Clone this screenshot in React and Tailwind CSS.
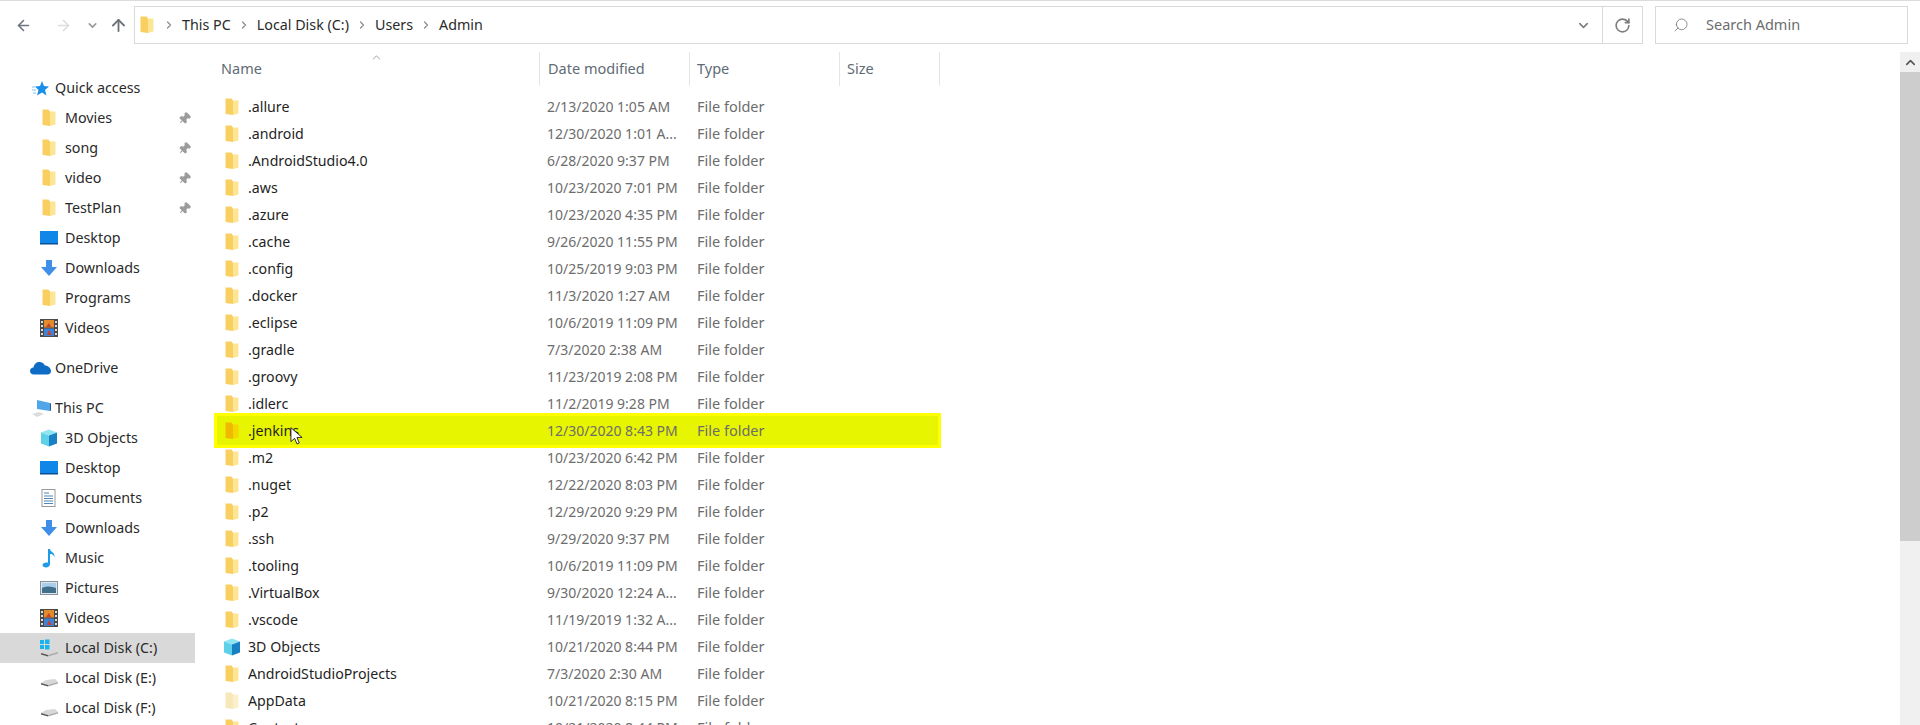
import React from "react";
import { ArrowLeft, ArrowRight, ArrowUp, ChevronDown, ChevronRight, ChevronUp, RotateCw, Search, Pin } from "lucide-react";

const F = "font-['Noto_Sans','Open_Sans',sans-serif]";

function Folder({ pale, strong }) {
  const a = strong ? "#f2d800" : pale ? "#fcf0cc" : "#fde596";
  const b = strong ? "#f0b800" : pale ? "#f8e8b8" : "#f9cf62";
  return (
    <svg width="14" height="18" viewBox="0 0 14 18" className="shrink-0">
      <path d="M0.500 0.500h6l1.500 2V17l-7.500-1z" fill={b} />
      <path d="M8 2.500h5.500V15.500L8 17z" fill={a} />
    </svg>
  );
}
function Cube({ size = 18 }) {
  return (
    <svg width={size} height={size} viewBox="0 0 18 18" className="shrink-0">
      <path d="M9 0.500l8 3-8 3-8-3z" fill="#8fe6f2" />
      <path d="M1 3.500l8 3v11l-8-3z" fill="#5ed0e8" />
      <path d="M9 6.500l8-3v11l-8 3z" fill="#1a80c4" />
    </svg>
  );
}
function Desktop() {
  return (
    <svg width="18" height="14" viewBox="0 0 18 14" className="shrink-0">
      <rect width="18" height="13" fill="#0f86e8" />
      <rect y="12" width="18" height="1.500" fill="#0b4f94" />
    </svg>
  );
}
function Down() {
  return (
    <svg width="18" height="18" viewBox="0 0 18 18" className="shrink-0">
      <path d="M6 1h6v7h5l-8 9-8-9h5z" fill="#3f8fe8" />
    </svg>
  );
}
function Film() {
  return (
    <svg width="18" height="18" viewBox="0 0 18 18" className="shrink-0">
      <rect width="18" height="18" fill="#4a4a4a" />
      <rect x="4" y="1" width="10" height="7.500" fill="#e28a2c" />
      <rect x="4" y="9.500" width="10" height="7.500" fill="#3f82d6" />
      <path d="M6 8l3-4 2 4zM7 16l2-5 3 5z" fill="#c9402c" />
      <g fill="#ddd">
        <rect x="1" y="2" width="2" height="2" /><rect x="1" y="6" width="2" height="2" /><rect x="1" y="10" width="2" height="2" /><rect x="1" y="14" width="2" height="2" />
        <rect x="15" y="2" width="2" height="2" /><rect x="15" y="6" width="2" height="2" /><rect x="15" y="10" width="2" height="2" /><rect x="15" y="14" width="2" height="2" />
      </g>
    </svg>
  );
}
function Doc() {
  return (
    <svg width="16" height="18" viewBox="0 0 16 18" className="shrink-0">
      <rect x="1" y="0.500" width="13" height="17" fill="#fff" stroke="#9a9a9a" />
      <path d="M3 4h5M3 7h9M3 9.500h9M3 12h9M3 14.500h9" stroke="#4f86b8" strokeWidth="1.200" />
    </svg>
  );
}
function Note() {
  return (
    <svg width="14" height="20" viewBox="0 0 14 20" className="shrink-0">
      <path d="M6 1h2c0 3 5 3 4.500 8-1-2.500-3-3-4.500-3v10c0 2-2 3.500-4 3.500s-3.500-1-3.500-2.500 2-3 5.500-2.500z" fill="#1e9be8" />
    </svg>
  );
}
function Pic() {
  return (
    <svg width="18" height="14" viewBox="0 0 18 14" className="shrink-0">
      <rect x="0.500" y="0.500" width="17" height="13" fill="#dfe7ee" stroke="#8a9199" />
      <rect x="2" y="2" width="14" height="5" fill="#a9cdea" />
      <path d="M2 7c4-2 9-2 14 0v5H2z" fill="#3f6f8c" />
    </svg>
  );
}
function Drive({ win }) {
  return (
    <svg width="20" height="18" viewBox="0 0 20 18" className="shrink-0">
      <path d="M7 11l9-1 3 3-10 3-7-2z" fill="#d7d7d7" />
      <path d="M2 14l7 2v1.500L2 15.500z" fill="#555" />
      <path d="M9 16l10-3v1.500L9 17.500z" fill="#a8a8a8" />
      {win && (
        <g fill="#18b4ee">
          <rect x="1" y="1" width="4" height="4" /><rect x="6" y="0.500" width="4.500" height="4.500" /><rect x="1" y="6" width="4" height="4" /><rect x="6" y="6" width="4.500" height="4.500" />
        </g>
      )}
    </svg>
  );
}
function Star() {
  return (
    <svg width="17" height="17" viewBox="0 0 17 17" className="shrink-0">
      <path d="M10 1l2 5 5 .5-4 3.500 1.500 5.500L10 12.500 5 15.500 6.500 10 3 6.500 8 6z" fill="#1a8fe8" />
      <path d="M0 7h3M0 10h4M1 13h3" stroke="#7fc2f2" strokeWidth="1" />
    </svg>
  );
}
function Cloud() {
  return (
    <svg width="21" height="14" viewBox="0 0 21 14" className="shrink-0">
      <path d="M4 13.500C1.500 13.500 0 12 0 10s1.500-3.500 3.500-3.500C4 3 6.500 1 9.500 1c2.500 0 4.500 1.500 5.300 3.500C18 4.500 21 7 21 10c0 2-1.500 3.500-3.500 3.500z" fill="#0f6cc4" />
    </svg>
  );
}
function Pc() {
  return (
    <svg width="20" height="19" viewBox="0 0 20 19" className="shrink-0">
      <path d="M6 1l13 3v8L6 10z" fill="#4fa6e8" />
      <path d="M19 4v8l1-.5V4.500z" fill="#2a5d8a" />
      <path d="M1 15l7-2 5 2-7 3z" fill="#dcdcdc" />
    </svg>
  );
}

const quick = [
  ["Movies", <Folder />, true],
  ["song", <Folder />, true],
  ["video", <Folder />, true],
  ["TestPlan", <Folder />, true],
  ["Desktop", <Desktop />],
  ["Downloads", <Down />],
  ["Programs", <Folder />],
  ["Videos", <Film />],
];
const pc = [
  ["3D Objects", <Cube />],
  ["Desktop", <Desktop />],
  ["Documents", <Doc />],
  ["Downloads", <Down />],
  ["Music", <Note />],
  ["Pictures", <Pic />],
  ["Videos", <Film />],
  ["Local Disk (C:)", <Drive win />, false, true],
  ["Local Disk (E:)", <Drive />],
  ["Local Disk (F:)", <Drive />],
];
const files = [
  [".allure", "2/13/2020 1:05 AM"],
  [".android", "12/30/2020 1:01 A..."],
  [".AndroidStudio4.0", "6/28/2020 9:37 PM"],
  [".aws", "10/23/2020 7:01 PM"],
  [".azure", "10/23/2020 4:35 PM"],
  [".cache", "9/26/2020 11:55 PM"],
  [".config", "10/25/2019 9:03 PM"],
  [".docker", "11/3/2020 1:27 AM"],
  [".eclipse", "10/6/2019 11:09 PM"],
  [".gradle", "7/3/2020 2:38 AM"],
  [".groovy", "11/23/2019 2:08 PM"],
  [".idlerc", "11/2/2019 9:28 PM"],
  [".jenkins", "12/30/2020 8:43 PM", "hl"],
  [".m2", "10/23/2020 6:42 PM"],
  [".nuget", "12/22/2020 8:03 PM"],
  [".p2", "12/29/2020 9:29 PM"],
  [".ssh", "9/29/2020 9:37 PM"],
  [".tooling", "10/6/2019 11:09 PM"],
  [".VirtualBox", "9/30/2020 12:24 A..."],
  [".vscode", "11/19/2019 1:32 A..."],
  ["3D Objects", "10/21/2020 8:44 PM", "cube"],
  ["AndroidStudioProjects", "7/3/2020 2:30 AM"],
  ["AppData", "10/21/2020 8:15 PM", "pale"],
  ["Contacts", "10/21/2020 8:44 PM"],
];

function NavItem({ label, icon, pin, active }) {
  return (
    <div className={`h-[30px] flex items-center shrink-0 ${active ? "bg-[#d9d9d9]" : ""}`}>
      <div className="w-[65px] pl-[34px] pr-[1px] flex justify-center items-center shrink-0">{icon}</div>
      <span className="text-[14.300px] text-[#2a2a2a] flex-1 whitespace-nowrap">{label}</span>
      {pin && <Pin size={13} className="mr-[4px] rotate-45 text-[#9b9b9b]" fill="#9b9b9b" />}
    </div>
  );
}

function Head({ label, w, pl = "pl-[7px]" }) {
  return (
    <div className={`${w} h-[34px] border-r border-[#e5e5e5] flex items-center ${pl} text-[14.500px] text-[#5f6b75] shrink-0`}>{label}</div>
  );
}

function Crumb({ children }) {
  return (
    <>
      <ChevronRight size={12} strokeWidth={2.500} className="text-[#8c8c8c] shrink-0" />
      <span className="text-[14.300px] text-[#2a2a2a] whitespace-nowrap">{children}</span>
    </>
  );
}

export default function App() {
  return (
    <div className={`${F} w-[1920px] h-[725px] bg-white overflow-hidden flex flex-col`}>
      <div className="h-[1px] bg-[#dcdcdc] shrink-0" />
      {/* toolbar */}
      <div className="h-[38px] mt-[5px] flex items-center shrink-0">
        <div className="w-[134px] flex items-center shrink-0 pl-[15px]">
          <ArrowLeft size={17} strokeWidth={2.300} className="text-[#6b7680]" />
          <ArrowRight size={17} strokeWidth={2.300} className="ml-[23px] text-[#dcdcdc]" />
          <ChevronDown size={13} strokeWidth={3} className="ml-[14px] text-[#9a9a9a]" />
          <ArrowUp size={19} strokeWidth={2.300} className="ml-[10px] text-[#6b7076]" />
        </div>
        <div className="w-[1509px] h-[38px] border border-[#d9d9d9] flex items-center shrink-0">
          <div className="ml-[5px] mr-[9px]"><Folder /></div>
          <div className="flex items-center gap-[7px]">
            <Crumb>This PC</Crumb>
            <Crumb>Local Disk (C:)</Crumb>
            <Crumb>Users</Crumb>
            <Crumb>Admin</Crumb>
          </div>
          <div className="flex-1" />
          <ChevronDown size={15} strokeWidth={2.500} className="mr-[11px] text-[#7d7d7d]" />
          <div className="w-[40px] h-full border-l border-[#d9d9d9] flex items-center justify-center">
            <RotateCw size={17} strokeWidth={2.300} className="text-[#7d7d7d]" />
          </div>
        </div>
        <div className="w-[253px] h-[38px] ml-[12px] border border-[#d9d9d9] flex items-center shrink-0">
          <Search size={16} strokeWidth={1.300} className="ml-[17px] text-[#7d7d7d] -scale-x-100" />
          <span className="ml-[17px] text-[14.500px] text-[#6d6d6d]">Search Admin</span>
        </div>
      </div>
      <div className="flex flex-1 min-h-0 mt-[8px]">
        {/* sidebar */}
        <div className="w-[195px] shrink-0 flex flex-col pt-[21px]">
          <div className="h-[30px] flex items-center shrink-0">
            <div className="w-[55px] pl-8 shrink-0"><Star /></div>
            <span className="text-[14.300px] text-[#2a2a2a]">Quick access</span>
          </div>
          {quick.map(([l, i, p]) => <NavItem key={l} label={l} icon={i} pin={p} />)}
          <div className="h-[30px] mt-[10px] flex items-center shrink-0">
            <div className="w-[55px] pl-[30px] shrink-0"><Cloud /></div>
            <span className="text-[14.300px] text-[#2a2a2a]">OneDrive</span>
          </div>
          <div className="h-[30px] mt-[10px] flex items-center shrink-0">
            <div className="w-[55px] pl-[31px] shrink-0"><Pc /></div>
            <span className="text-[14.300px] text-[#2a2a2a]">This PC</span>
          </div>
          {pc.map(([l, i, p, a]) => <NavItem key={l + "x"} label={l} icon={i} pin={p} active={a} />)}
        </div>
        {/* list */}
        <div className="flex-1 min-w-0 relative flex flex-col">
          <div className="flex h-[34px] pl-[19px] shrink-0">
            <Head label="Name" w="w-[326px]" />
            <Head label="Date modified" w="w-[150px]" pl="pl-[8px]" />
            <Head label="Type" w="w-[150px]" />
            <Head label="Size" w="w-[100px]" />
          </div>
          <ChevronUp size={13} strokeWidth={1.500} className="absolute left-[175px] -top-[1px] text-[#8a8a8a]" />
          <div className="pt-[7px] flex flex-col">
            {files.map(([n, d, k]) => {
              const hl = k === "hl";
              return (
                <div key={n} className={`flex items-center shrink-0 ml-[19px] ${hl ? "h-[35px] -my-[4px] w-[727px] border-[3px] border-[#ffff00] bg-[#e8f500] relative" : "h-[27px] pl-[3px]"}`}>
                  <div className="shrink-0 flex w-[31px] pl-[8px]">
                    {k === "cube" ? <div className="-ml-[2px]"><Cube /></div> : <Folder pale={k === "pale"} strong={hl} />}
                  </div>
                  <span className="w-[299px] text-[14.200px] text-[#1f1f1f] whitespace-nowrap">{n}</span>
                  <span className="w-[150px] text-[14px] text-[#6d6d6d] whitespace-nowrap">{d}</span>
                  <span className="text-[14.500px] text-[#6d6d6d] whitespace-nowrap">File folder</span>
                  {hl && (
                    <svg width="13" height="21" viewBox="0 0 14 21" className="absolute left-[73px] top-[10px]">
                      <path d="M1 1v15l4-3.500 2.500 6 2.500-1-2.500-6H13z" fill="#fff" stroke="#222" strokeWidth="1" />
                    </svg>
                  )}
                </div>
              );
            })}
          </div>
        </div>
        {/* scrollbar */}
        <div className="w-[20px] bg-[#f0f0f0] shrink-0 flex flex-col">
          <div className="h-[20px] flex items-center justify-center shrink-0">
            <ChevronUp size={15} strokeWidth={2.500} className="text-[#555]" />
          </div>
          <div className="h-[469px] bg-[#cdcdcd] shrink-0" />
        </div>
      </div>
    </div>
  );
}
